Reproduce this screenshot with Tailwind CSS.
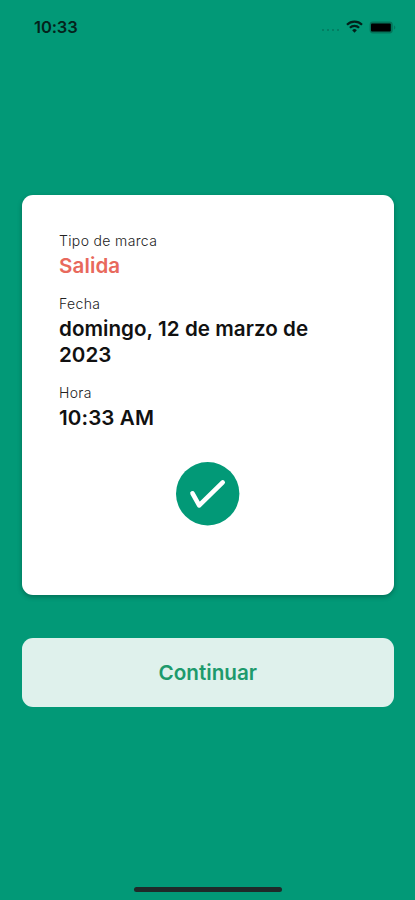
<!DOCTYPE html>
<html lang="es">
<head>
  <meta charset="UTF-8">
  <meta name="viewport" content="width=device-width, initial-scale=1.0">
  <title>Marca registrada</title>
  <script src="https://cdn.jsdelivr.net/npm/@tailwindcss/browser@4"></script>
</head>
<body class="bg-[#029977] font-['Inter','Liberation_Sans',sans-serif]">

  <div class="w-[415px] h-[900px] flex flex-col overflow-hidden">

    <!-- Status bar -->
    <header class="h-[54px] shrink-0 flex items-center justify-between pl-[34px] pr-[19px] text-[#04231b]">
      <span class="text-[16.5px] leading-5 font-semibold tracking-[-0.1px]">10:33</span>
      <div class="flex items-center -mt-[1px]">
        <div class="flex gap-[3px] mt-[7px] mr-[7px]">
          <span class="w-[2px] h-[2px] rounded-full bg-[#04775d]"></span>
          <span class="w-[2px] h-[2px] rounded-full bg-[#04775d]"></span>
          <span class="w-[2px] h-[2px] rounded-full bg-[#04775d]"></span>
          <span class="w-[2px] h-[2px] rounded-full bg-[#04775d]"></span>
        </div>
        <svg class="w-[17px] h-[13px] mr-[6px]" viewBox="0 0 17 13" fill="none" stroke="#03201a" stroke-width="2.2">
          <path d="M1 4.7a10.6 10.6 0 0 1 15 0" />
          <path d="M3.9 7.8a6.5 6.5 0 0 1 9.2 0" />
          <path d="M8.5 12.7L6.2 10.3a3.2 3.2 0 0 1 4.6 0z" fill="#03201a" stroke="none" />
        </svg>
        <svg class="w-[27px] h-[13px] mt-[1px]" viewBox="0 0 27 13">
          <rect x="0.6" y="0.6" width="23.2" height="11.8" rx="3.4" fill="#04745a" />
          <rect x="2" y="2.5" width="19.8" height="8" rx="1" fill="#000" />
          <path d="M24.9 4.4v4.2c.9-.4 1.4-1.2 1.4-2.1s-.5-1.7-1.4-2.1z" fill="#037a60" />
        </svg>
      </div>
    </header>

    <main class="mt-[140.6px] mx-[21.5px] w-[372.5px]">
      <!-- Card -->
      <div class="h-[400.6px] rounded-[11px] bg-white shadow-[0_2px_5px_rgba(0,0,0,0.28)] pt-[36.8px] px-[37.5px]">
        <div class="flex flex-col gap-[15.5px]">
          <div>
            <p class="text-[14px] leading-5 font-light tracking-[0.35px] text-[#222]">Tipo de marca</p>
            <p class="mt-[2px] text-[20.6px] leading-[25.5px] font-semibold text-[#e8695c] tracking-[0.1px]">Salida</p>
          </div>
          <div>
            <p class="text-[14px] leading-5 font-light tracking-[0.35px] text-[#222]">Fecha</p>
            <p class="mt-[2px] text-[20.6px] leading-[25.5px] font-semibold text-[#111] whitespace-nowrap tracking-[0.04px]">domingo, 12 de marzo de<br>2023</p>
          </div>
          <div>
            <p class="text-[14px] leading-5 font-light tracking-[0.35px] text-[#222]">Hora</p>
            <p class="mt-[2px] text-[20.6px] leading-[25.5px] font-semibold text-[#111] tracking-[0.1px]">10:33 AM</p>
          </div>
        </div>
        <svg class="w-[64px] h-[64px] mt-[31.3px] mx-auto" viewBox="0 0 64 64" fill="none">
          <circle cx="31.7" cy="31.7" r="31.7" fill="#029977" />
          <path d="M16.5 31.3L23.2 43.4L46.7 20.4" stroke="#fff" stroke-width="4.6" stroke-linecap="round" stroke-linejoin="round" />
        </svg>
      </div>

      <!-- Button -->
      <button class="mt-[42.4px] w-full h-[69px] rounded-[11px] bg-[#dff1ec] text-[20.7px] font-semibold text-[#1d9a6c]">Continuar</button>
    </main>

    <!-- Home indicator -->
    <div class="mt-auto mb-[8px] mx-auto w-[148px] h-[5px] rounded-full bg-[#1f2a29]"></div>
  </div>

</body>
</html>
